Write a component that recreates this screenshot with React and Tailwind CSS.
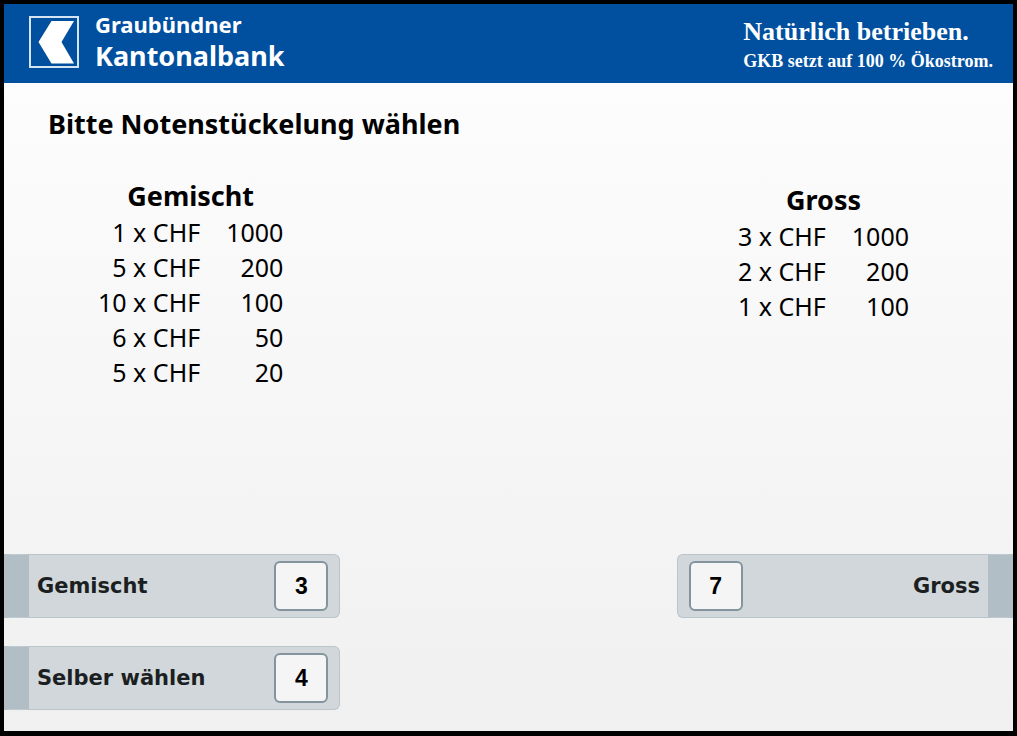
const mixedNotes = [
  { count: 1, value: 1000 },
  { count: 5, value: 200 },
  { count: 10, value: 100 },
  { count: 6, value: 50 },
  { count: 5, value: 20 },
];

const largeNotes = [
  { count: 3, value: 1000 },
  { count: 2, value: 200 },
  { count: 1, value: 100 },
];

function Logo() {
  return (
    <svg viewBox="0 0 50 52" className="w-[50px] h-[52px] shrink-0" aria-hidden="true">
      <rect x="1" y="1" width="48" height="50" fill="none" stroke="#d5e4f3" strokeWidth="2" />
      <path d="M22.5 5H45L32.5 26L45 47.5H22.5L9.5 26Z" fill="#fff" />
    </svg>
  );
}

function NoteTable({ title, notes }) {
  return (
    <table className="text-[25px] leading-[35px] text-right whitespace-nowrap">
      <caption className="text-[27px] leading-[38px] font-bold text-center">{title}</caption>
      <tbody>
        {notes.map((note) => (
          <tr key={note.value}>
            <td className="p-0">{note.count} x CHF</td>
            <td className="p-0 pl-[26px]">{note.value}</td>
          </tr>
        ))}
      </tbody>
    </table>
  );
}

function KeyCap({ children }) {
  return (
    <span className="flex items-center justify-center w-[54px] h-[50px] rounded-md border-2 border-[#83949d] bg-[#f5f5f5] text-black font-['Liberation_Sans',sans-serif] text-[23px] font-bold">
      {children}
    </span>
  );
}

// Side keys: the dark strip always sits on the outer screen edge
function ChoiceButton({ label, keyNumber, side = 'left' }) {
  const isLeft = side === 'left';

  return (
    <button
      type="button"
      className={`flex items-center justify-between w-1/3 h-16 border-y border-[#b9c5cb] bg-[#d1d7db] text-[#1c1f22] font-['DejaVu_Sans',sans-serif] text-[21px] font-bold ${
        isLeft
          ? 'border-r border-l-[25px] border-l-[#b1bec5] rounded-r-md pl-2 pr-[11px]'
          : 'flex-row-reverse border-l border-r-[25px] border-r-[#b1bec5] rounded-l-md pr-2 pl-[11px]'
      }`}
    >
      <span className="pt-0.5">{label}</span>
      <KeyCap>{keyNumber}</KeyCap>
    </button>
  );
}

export default function App() {
  return (
    <div className="flex flex-col min-h-screen border-4 border-b-[5px] border-black bg-linear-to-b from-[#fefefe] to-[#f0f0f0] text-black font-['Noto_Sans',sans-serif]">
      <header className="flex items-center justify-between h-[79px] pl-[25px] pr-5 pb-1 bg-[#00509f] text-white">
        <div className="flex items-center gap-4">
          <Logo />
          <div className="pb-1 font-bold">
            <div className="text-[22px] leading-[32px]">Graubündner</div>
            <div className="text-[27px] leading-[32px]">Kantonalbank</div>
          </div>
        </div>
        <div className="pt-2 font-['Liberation_Serif',serif] font-bold">
          <div className="text-[26px] leading-[30px]">Natürlich betrieben.</div>
          <div className="text-[18px] leading-[28px]">GKB setzt auf 100 % Ökostrom.</div>
        </div>
      </header>

      <main className="flex flex-col grow pt-5 pb-[21px]">
        <h1 className="pl-11 text-[27px] leading-[42px] font-bold">Bitte Notenstückelung wählen</h1>

        <div className="flex items-start justify-between grow pt-8 pl-[94px] pr-[104px]">
          <NoteTable title="Gemischt" notes={mixedNotes} />
          <div className="pt-1">
            <NoteTable title="Gross" notes={largeNotes} />
          </div>
        </div>

        <div className="flex flex-col gap-7">
          <div className="flex justify-between">
            <ChoiceButton label="Gemischt" keyNumber={3} />
            <ChoiceButton label="Gross" keyNumber={7} side="right" />
          </div>
          <ChoiceButton label="Selber wählen" keyNumber={4} />
        </div>
      </main>
    </div>
  );
}
